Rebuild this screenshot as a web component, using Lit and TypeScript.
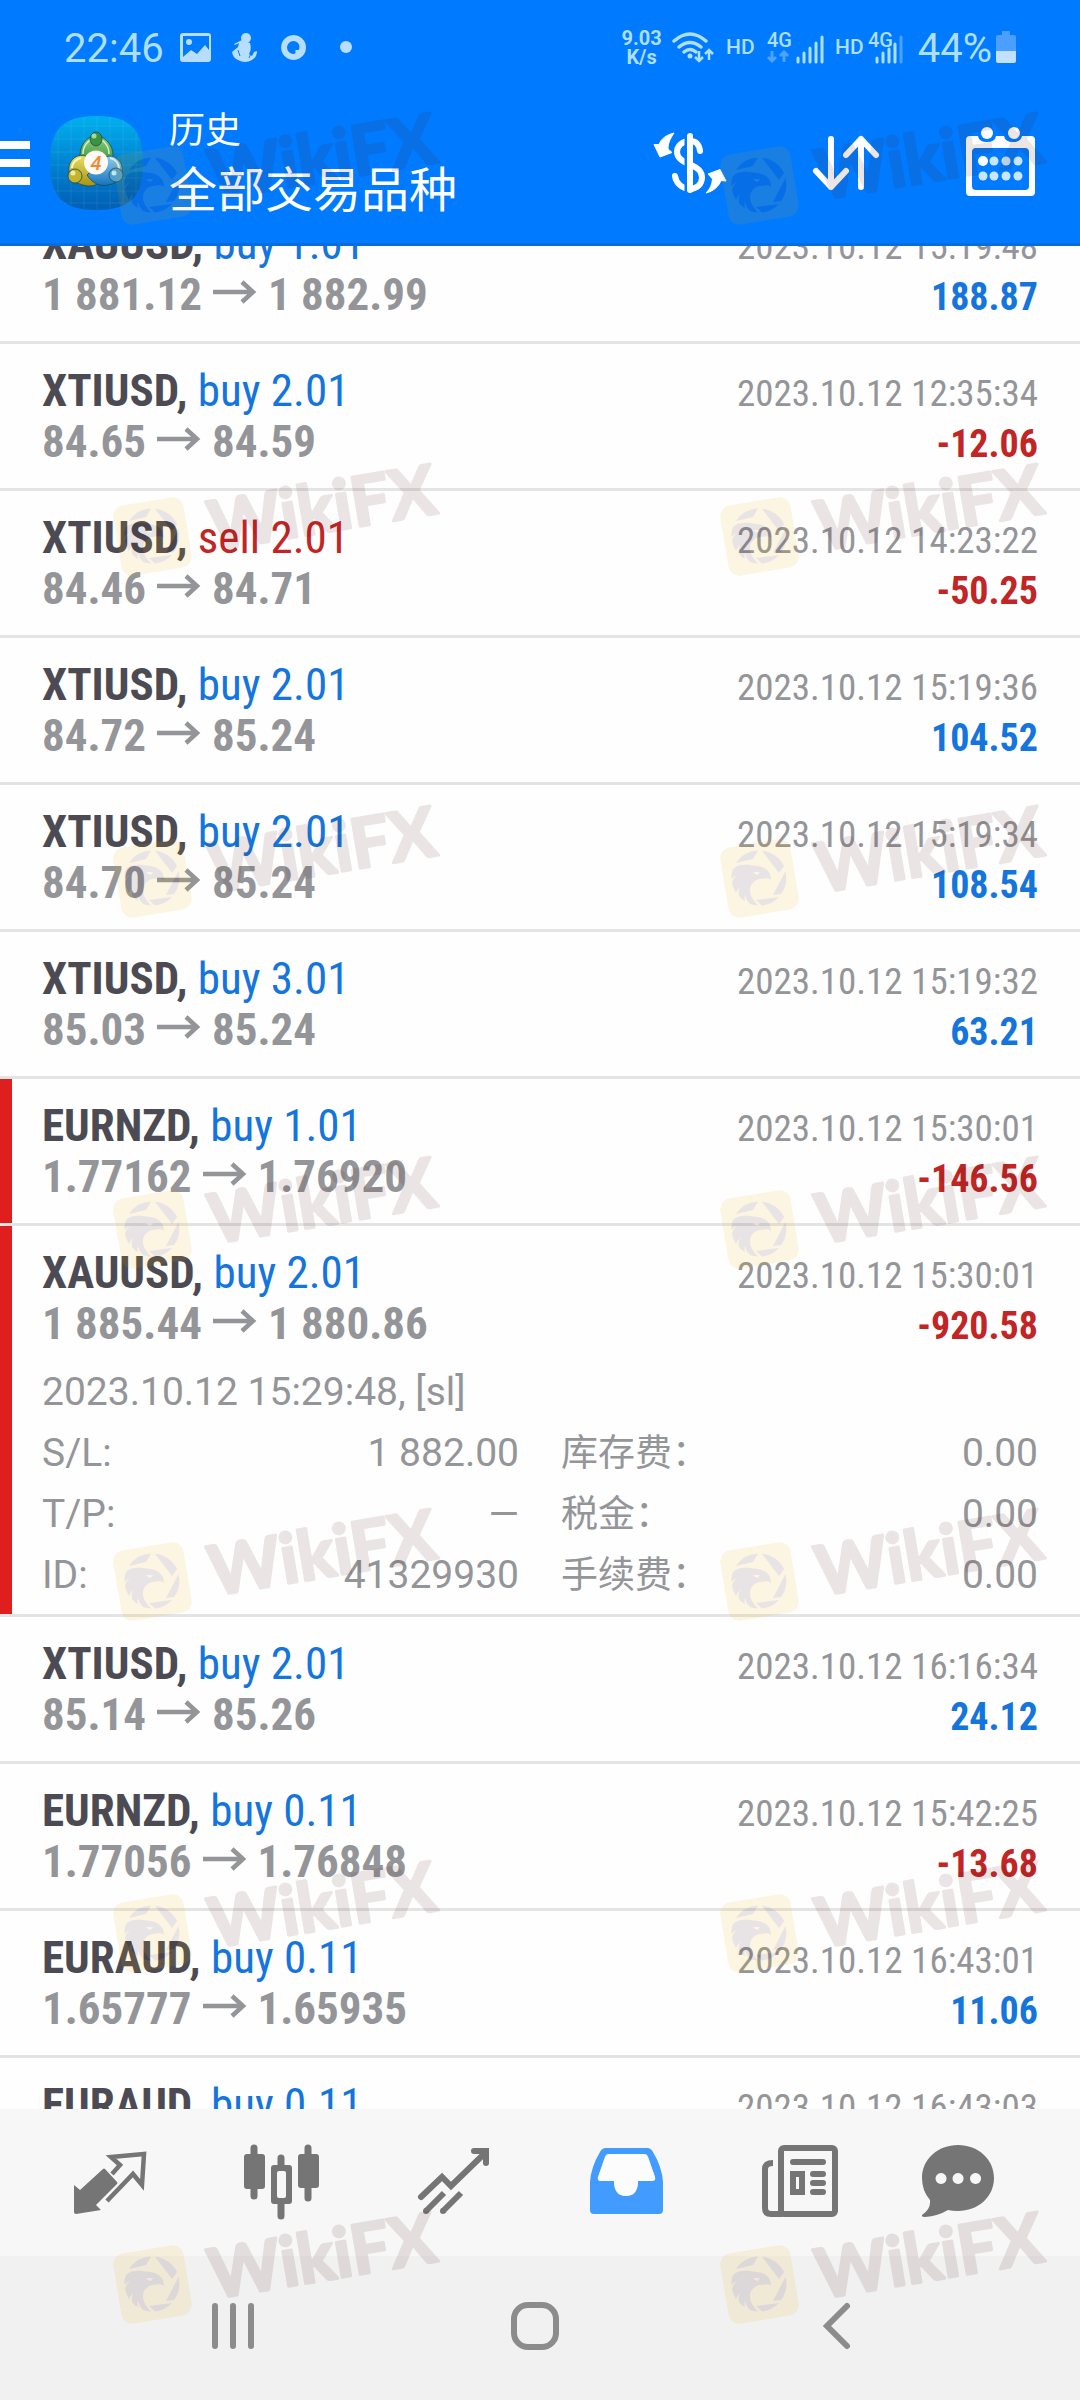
import { LitElement, html, css, svg, nothing } from "lit";
import { customElement, property } from "lit/decorators.js";

interface Deal {
  symbol: string;
  side: "buy" | "sell";
  volume: string;
  open: string;
  close: string;
  time: string;
  profit: string;
  stopped?: boolean;
  comment?: string;
  details?: [string, string][];
}

const DEALS: Deal[] = [
  { symbol: "XAUUSD", side: "buy", volume: "1.01", open: "1 881.12", close: "1 882.99", time: "2023.10.12 15:19:48", profit: "188.87" },
  { symbol: "XTIUSD", side: "buy", volume: "2.01", open: "84.65", close: "84.59", time: "2023.10.12 12:35:34", profit: "-12.06" },
  { symbol: "XTIUSD", side: "sell", volume: "2.01", open: "84.46", close: "84.71", time: "2023.10.12 14:23:22", profit: "-50.25" },
  { symbol: "XTIUSD", side: "buy", volume: "2.01", open: "84.72", close: "85.24", time: "2023.10.12 15:19:36", profit: "104.52" },
  { symbol: "XTIUSD", side: "buy", volume: "2.01", open: "84.70", close: "85.24", time: "2023.10.12 15:19:34", profit: "108.54" },
  { symbol: "XTIUSD", side: "buy", volume: "3.01", open: "85.03", close: "85.24", time: "2023.10.12 15:19:32", profit: "63.21" },
  { symbol: "EURNZD", side: "buy", volume: "1.01", open: "1.77162", close: "1.76920", time: "2023.10.12 15:30:01", profit: "-146.56", stopped: true },
  {
    symbol: "XAUUSD", side: "buy", volume: "2.01", open: "1 885.44", close: "1 880.86", time: "2023.10.12 15:30:01", profit: "-920.58", stopped: true,
    comment: "2023.10.12 15:29:48, [sl]",
    details: [
      ["S/L:", "1 882.00"],
      ["库存费：", "0.00"],
      ["T/P:", "—"],
      ["税金：", "0.00"],
      ["ID:", "41329930"],
      ["手续费：", "0.00"],
    ],
  },
  { symbol: "XTIUSD", side: "buy", volume: "2.01", open: "85.14", close: "85.26", time: "2023.10.12 16:16:34", profit: "24.12" },
  { symbol: "EURNZD", side: "buy", volume: "0.11", open: "1.77056", close: "1.76848", time: "2023.10.12 15:42:25", profit: "-13.68" },
  { symbol: "EURAUD", side: "buy", volume: "0.11", open: "1.65777", close: "1.65935", time: "2023.10.12 16:43:01", profit: "11.06" },
  { symbol: "EURAUD", side: "buy", volume: "0.11", open: "1.65790", close: "1.65935", time: "2023.10.12 16:43:03", profit: "10.02" },
];

@customElement("status-bar")
class StatusBar extends LitElement {
  static styles = css`
    :host {
      display: flex;
      align-items: center;
      justify-content: space-between;
      height: 94px;
      padding: 0 64px;
      color: #addfff;
      font-family: Roboto, "Liberation Sans", sans-serif;
    }
    .group { display: flex; align-items: center; }
    .clock { font-size: 40px; line-height: 48px; margin-right: 12px; padding-top: 4px; }
    .rate { font-size: 20px; font-weight: 700; line-height: 19px; text-align: center; margin-right: 10px; padding-top: 2px; }
    .level { font-size: 40px; line-height: 48px; margin: 0 4px 0 14px; padding-top: 4px; }
    .label { font-size: 21px; font-weight: 500; }
    .small { font-size: 20px; font-weight: 500; }
    svg { display: block; }
  `;

  render() {
    return html`
      <div class="group">
        <span class="clock">22:46</span>
        <svg width="180" height="48" viewBox="176 23 180 48" fill="#b8deff" aria-hidden="true">
          <path fill-rule="evenodd" d="M183 33h25q3 0 3 3v23q0 3-3 3h-25q-3 0-3-3v-23q0-3 3-3zm0 3v21l8-7 6 4 8-9 4 5v-14z" />
          <circle cx="189" cy="42" r="3" />
          <circle cx="246" cy="38" r="5" />
          <path d="M234 44l8-4 8 3q2 6-1 11l3 2 2-4 3-1q0 6-5 9-7 4-14 0-5-2-6-8l6-5 1-4-4 2z" />
          <path fill="none" stroke="#007aff" stroke-width="1" d="M238 50l2 6m12-5l-3 7" />
          <path fill-rule="evenodd" d="M293.500 35a12.500 12.500 0 1 0 .1 0zm0 6a6 6 0 0 1 6 6q0 2-1 3h-3v3q-1 1-2 1a6.500 6.500 0 0 1 0-13z" />
          <circle cx="346" cy="47" r="6" />
        </svg>
      </div>
      <div class="group">
        <span class="rate">9.03<br />K/s</span>
        <svg width="232" height="48" viewBox="674 23 232 48" aria-label="Wi-Fi, HD 4G, HD 4G">
          <g fill="none" stroke="#addfff" stroke-width="3.500" stroke-linecap="round">
            <path d="M676 41q16-14 32 0M681 47q11-9 22 0M686 52q6-5 12 0" />
          </g>
          <circle cx="692" cy="56" r="2.500" fill="#addfff" />
          <path d="M701 51v10m-4-4l4 4 4-4M711 60v-10m-4 4l4-4 4 4" fill="none" stroke="#addfff" stroke-width="2.500" />
          <g fill="#addfff">
            <text class="label" x="728" y="54">HD</text>
            <text class="small" x="769" y="47">4G</text>
            <text class="label" x="837" y="54">HD</text>
            <text class="small" x="870" y="47">4G</text>
          </g>
          <path d="M774 51v10m-4-4l4 4 4-4M786 62v-10m-4 4l4-4 4 4" fill="none" stroke="#4da3ff" stroke-width="3" />
          <g stroke="#addfff" stroke-width="3" stroke-linecap="round">
            <path d="M800 58v4M806 53v9M812 48v14M818 43v19M824 37v25" />
            <path d="M879 58v4M885 53v9M891 49v13M897 44v18" />
            <path d="M903 37v25" stroke="#4da3ff" />
          </g>
        </svg>
        <span class="level">44%</span>
        <svg width="20" height="32" viewBox="0 0 20 32" aria-hidden="true">
          <path d="M6 0h8v4h4q2 0 2 2v15h-20v-15q0-2 2-2h4z" fill="#4d9fff" />
          <path d="M0 20h20v10q0 2-2 2h-16q-2 0-2-2z" fill="#c2e0ff" />
        </svg>
      </div>
    `;
  }
}

@customElement("title-bar")
class TitleBar extends LitElement {
  static styles = css`
    :host {
      display: flex;
      align-items: center;
      height: 137px;
      padding-bottom: 12px;
      color: #fff;
      font-family: Roboto, "Noto Sans CJK SC", sans-serif;
    }
    button { border: 0; padding: 0; background: none; color: inherit; font: inherit; cursor: pointer; }
    svg { display: block; }
    .menu { width: 50px; }
    .titles { flex: 1; padding: 4px 0 0 26px; min-width: 0; }
    .caption { margin: 0; font-size: 36px; line-height: 52px; font-weight: 400; }
    .filter { display: block; font-size: 48px; line-height: 68px; text-align: left; }
    .actions { display: flex; }
    .action { width: 156px; display: flex; justify-content: center; }
  `;

  render() {
    return html`
      <button class="menu" aria-label="菜单">
        <svg width="30" height="48" viewBox="0 0 30 48" fill="#fff"><path d="M0 2h30v8h-30zM0 20h30v8h-30zM0 38h30v8h-30z" /></svg>
      </button>
      <svg width="93" height="94" viewBox="0 0 93 94" aria-hidden="true">
        <defs>
          <linearGradient id="sky" x1="0" y1="0" x2="0" y2="1"><stop offset="0" stop-color="#00b0ee" /><stop offset="0.550" stop-color="#007fd0" /><stop offset="1" stop-color="#005fb4" /></linearGradient>
          <linearGradient id="leaf" x1="0" y1="0" x2="0" y2="1"><stop offset="0" stop-color="#8fd07c" /><stop offset="1" stop-color="#217f2e" /></linearGradient>
          <linearGradient id="gold" x1="0" y1="0" x2="0" y2="1"><stop offset="0" stop-color="#e8df62" /><stop offset="1" stop-color="#a8940f" /></linearGradient>
          <linearGradient id="sea" x1="0" y1="0" x2="0" y2="1"><stop offset="0" stop-color="#8ccdf0" /><stop offset="1" stop-color="#1672bb" /></linearGradient>
        </defs>
        <path d="M46.500 0C80 0 93 13 93 47S80 94 46.500 94 0 81 0 47 13 0 46.500 0z" fill="url(#sky)" />
        <path d="M8 14v66M21 4v86M34 1v92M47 0v94M60 1v92M73 4v86M86 16v62M14 10h66M4 23h86M1 36h91M0 49h93M1 62h91M4 75h85M14 87h65" stroke="#fff" stroke-opacity="0.080" fill="none" />
        <g stroke="#1d4a50" stroke-width="0.800">
          <path d="M46 20C56 20 63 30 63 39C63 47 57 53 50 55L40 55C33 52 30 46 30 39C30 30 36 20 46 20z" fill="url(#leaf)" />
          <path d="M33 38C33 30 38 24 44 23M48 23C54 24 59 30 59 38" fill="none" stroke="#d6f2c8" stroke-width="1.500" />
          <path d="M21 60C17 54 19 46 24 42C29 38 36 39 42 43L50 66C46 70 39 71 33 69C28 68 24 65 21 60z" fill="url(#gold)" />
          <path d="M22 52C22 47 26 43 31 42" fill="none" stroke="#fbf8c4" stroke-width="2" />
          <path d="M71 60C74 53 72 46 66 42C62 39 57 40 54 42L37 59C42 67 50 71 58 69C64 68 69 65 71 60z" fill="url(#sea)" />
          <path d="M60 42C65 43 69 47 69 53" fill="none" stroke="#d5efff" stroke-width="2" />
          <ellipse cx="46" cy="23" rx="6" ry="7" fill="#3d9440" />
          <circle cx="25" cy="60" r="7" fill="#c4b32c" />
          <circle cx="66" cy="59" r="7" fill="#4aa0d4" />
        </g>
        <circle cx="44" cy="20" r="2.500" fill="#a5d99a" />
        <circle cx="23" cy="57" r="2.500" fill="#f0eaa0" />
        <circle cx="64" cy="57" r="2.500" fill="#c2e6fa" />
        <circle cx="46" cy="46.500" r="12" fill="#fffaf4" />
        <text x="46" y="54" text-anchor="middle" font-size="20" font-style="italic" font-weight="500" fill="#f0883a">4</text>
      </svg>
      <div class="titles">
        <h1 class="caption">历史</h1>
        <button class="filter">全部交易品种</button>
      </div>
      <div class="actions">
        <button class="action" aria-label="余额操作">
          <svg width="96" height="96" viewBox="2 4 96 96" fill="#fff">
            <path d="M60 40C59 32 55 30 50 30C42 30 37 35 37 41C37 47 42 50.500 50 53.500C58 56.500 62 60 62 66.500C62 73 57 78 50 78C42 78 36 72 35 65" fill="none" stroke="#fff" stroke-width="6" stroke-linecap="round" />
            <path d="M44.500 22h4v60h-4z" fill="#007aff" />
            <path d="M50 25v54" stroke="#fff" stroke-width="6" stroke-linecap="round" />
            <path d="M34 22C26 24 21 28 19 33.500L14 33.500L20 46L32 41.500L28 38C28 32 30 28 34 22z" stroke="#fff" stroke-linejoin="round" />
            <path d="M66 82C70 78 72 74 72.500 68L68 63L80 58.500L86 70L81 69.500C79 75 74 80 66 82z" stroke="#fff" stroke-linejoin="round" />
          </svg>
        </button>
        <button class="action" aria-label="排序">
          <svg width="96" height="96" viewBox="798 114 96 96" fill="none" stroke="#fff" stroke-width="6" stroke-linecap="round" stroke-linejoin="round">
            <path d="M831 138v48M816 170l15 16 15-16M861 186v-48M846 154l15-16 15 16" />
          </svg>
        </button>
        <button class="action" aria-label="选择时间段">
          <svg width="96" height="96" viewBox="954 114 96 96" fill="#fff">
            <path fill-rule="evenodd" d="M970 135h8q1 6 9 6t9-6h8q1 6 9 6t9-6h9q4 0 4 4v52q0 4-4 4h-61q-4 0-4-4v-52q0-4 4-4zm6 12q-4 0-4 4v34q0 4 4 4h49q4 0 4-4v-34q0-4-4-4z" />
            <circle cx="987" cy="132" r="6" /><circle cx="1014" cy="132" r="6" />
            <circle cx="983" cy="160" r="5" />
            <g fill="#c8e6ff">
              <circle cx="994" cy="160" r="4.500" /><circle cx="1006" cy="160" r="4.500" /><circle cx="1018" cy="160" r="4.500" />
              <circle cx="983" cy="175" r="4.500" /><circle cx="994" cy="175" r="4.500" /><circle cx="1006" cy="175" r="4.500" /><circle cx="1018" cy="175" r="4.500" />
            </g>
          </svg>
        </button>
      </div>
    `;
  }
}

@customElement("deal-row")
class DealRow extends LitElement {
  @property({ attribute: false }) deal!: Deal;

  static styles = css`
    :host {
      display: block;
      background: #fefefe;
      border-bottom: 3px solid #e4e4e4;
      font-family: "Roboto Condensed", "Liberation Sans Narrow", Roboto, sans-serif;
      color: #949599;
    }
    .row { padding: 21px 42px; }
    .stopped { padding-left: 30px; border-left: 12px solid #e01e1e; }
    .expanded { padding-bottom: 8px; }
    .line { display: flex; justify-content: space-between; align-items: baseline; line-height: 51px; height: 51px; }
    .deal, .prices { font-size: 45px; }
    .symbol { color: #4c4b53; font-weight: 700; }
    .buy { color: #1475dc; }
    .sell { color: #c22525; }
    .prices { font-weight: 700; }
    .arrow { width: 44px; height: 24px; margin: 0 11px 6px 11px; vertical-align: baseline; }
    .time { font-size: 37px; }
    .profit { font-size: 38px; font-weight: 700; }
    .more { margin-top: 13px; font: 39px/61px Roboto, "Noto Sans CJK SC", sans-serif; }
    .comment { margin: 0; }
    .details { display: grid; grid-template-columns: 1fr 1fr; column-gap: 42px; margin: 0; }
    .pair { display: flex; justify-content: space-between; align-items: baseline; height: 61px; }
    .pair:nth-child(even) dt { font-size: 37px; }
    dd { margin: 0; }
  `;

  render() {
    const d = this.deal;
    return html`
      <article class="row ${d.stopped ? "stopped" : ""} ${d.details ? "expanded" : ""}">
        <div class="line">
          <span class="deal"><span class="symbol">${d.symbol},</span> <span class=${d.side}>${d.side} ${d.volume}</span></span>
          <time class="time">${d.time}</time>
        </div>
        <div class="line">
          <span class="prices">${d.open}<svg class="arrow" viewBox="0 0 44 24" role="img" aria-label="→"><path d="M0 12h40M29 2l11 10-11 10" fill="none" stroke="#949599" stroke-width="4.500" /></svg>${d.close}</span>
          <span class="profit ${d.profit.startsWith("-") ? "sell" : "buy"}">${d.profit}</span>
        </div>
        ${d.details
          ? html`<div class="more">
              <p class="comment">${d.comment}</p>
              <dl class="details">
                ${d.details.map(([name, value]) => html`<div class="pair"><dt>${name}</dt><dd>${value}</dd></div>`)}
              </dl>
            </div>`
          : nothing}
      </article>
    `;
  }
}

const TABS = [
  {
    label: "行情",
    icon: svg`
      <path d="M103 2169q1-1 2 0l12 13q1 1 0 2l-21 21 5 5-25 4q-2 0-2-2v-27l6 5z" />
      <path d="M112 2174l8-9-9-8 33-3-2 31-9-11-26 27" fill="none" stroke="#757575" stroke-width="4.500" />`,
  },
  {
    label: "图表",
    icon: svg`
      <path d="M254 2148v48M308 2148v50M281 2158v8M281 2203v13" fill="none" stroke="#757575" stroke-width="7" stroke-linecap="round" />
      <rect x="244" y="2154" width="21" height="35" rx="3" /><rect x="298" y="2154" width="21" height="34" rx="3" />
      <path fill-rule="evenodd" d="M274 2165h15q3 0 3 3v33q0 3-3 3h-15q-3 0-3-3v-33q0-3 3-3zm5 6q-2 0-2 2v23q0 2 2 2h5q2 0 2-2v-23q0-2-2-2z" />`,
  },
  {
    label: "交易",
    icon: svg`
      <path d="M421 2197l21-20 9 9 34-33M474 2151h12v12" fill="none" stroke="#757575" stroke-width="6" stroke-linecap="round" stroke-linejoin="miter" />
      <path d="M444 2193l-18 18M461 2193l-18 18" fill="none" stroke="#757575" stroke-width="6" />
      <circle cx="426" cy="2211" r="3" /><circle cx="443" cy="2211" r="3" />`,
  },
  {
    label: "历史",
    icon: svg`
      <path fill="#429bff" fill-rule="evenodd" d="M606 2148h41q4 0 6 4 9 15 10 30v28q0 4-4 4h-65q-4 0-4-4v-28q1-15 10-30 2-4 6-4zm3 6q-3 0-4 3l-7 20q-1 4 3 4h13q0 15 12 15t12-15h14q4 0 3-4l-7-20q-1-3-4-3z" />
      <path fill="#fff" fill-opacity="0.600" d="M609 2154q-3 0-4 3l-7 20q-1 4 3 4h13q0 15 12 15t12-15h14q4 0 3-4l-7-20q-1-3-4-3z" />`,
  },
  {
    label: "新闻",
    icon: svg`
      <g fill="none" stroke="#757575" stroke-width="6">
        <rect x="781" y="2148" width="54" height="66" rx="3" />
        <path d="M773 2163q-8 0-8 6v39q0 6 6 6h12" />
        <rect x="793" y="2174" width="9" height="18" />
      </g>
      <path d="M793 2162h30M813 2174h10M813 2183h10M813 2192h10" stroke="#757575" stroke-width="6" stroke-linecap="round" />`,
  },
  {
    label: "消息",
    icon: svg`
      <path fill-rule="evenodd" d="M958 2145c20 0 36 14 36 33s-16 33-36 33q-6 0-10-1-10 6-23 7-4 0-3-2 9-6 8-15-8-9-8-22c0-19 16-33 36-33zM941 2173a5.500 5.500 0 1 0 .1 0zm17 0a5.500 5.500 0 1 0 .1 0zm17.500 0a5.500 5.500 0 1 0 .1 0z" />`,
  },
];

@customElement("tab-bar")
class TabBar extends LitElement {
  static styles = css`
    :host { display: block; background: #f7f7f7; }
    .tabs { display: grid; grid-template-columns: repeat(6, 1fr); padding: 0 24px; }
    .tab { display: flex; justify-content: center; padding: 25px 0 26px; border: 0; background: none; cursor: pointer; }
    svg { display: block; }
  `;

  render() {
    return html`<nav class="tabs">
      ${TABS.map(
        (tab, i) => html`<button class="tab" aria-label=${tab.label}>
          <svg width="96" height="96" viewBox="${62 + 172 * i} 2134 96 96" fill="#757575">${tab.icon}</svg>
        </button>`,
      )}
    </nav>`;
  }
}

@customElement("system-nav")
class SystemNav extends LitElement {
  static styles = css`
    :host { display: block; background: #f1f1f1; }
    .keys { display: grid; grid-template-columns: repeat(3, 1fr); padding: 0 92px 0 82px; height: 144px; }
    .key { display: flex; justify-content: center; align-items: center; padding: 0 0 4px; border: 0; background: none; }
    svg { display: block; }
  `;

  render() {
    return html`<div class="keys">
      <button class="key" aria-label="Recents">
        <svg width="60" height="60" viewBox="0 0 60 60" stroke="#8c8c8c" stroke-width="6" stroke-linecap="round"><path d="M12 10v40M30 10v40M48 10v40" /></svg>
      </button>
      <button class="key" aria-label="Home">
        <svg width="60" height="60" viewBox="0 0 60 60" fill="none" stroke="#8c8c8c" stroke-width="6"><rect x="9" y="9" width="42" height="42" rx="14" /></svg>
      </button>
      <button class="key" aria-label="Back">
        <svg width="60" height="60" viewBox="0 0 60 60" fill="none" stroke="#8c8c8c" stroke-width="6" stroke-linecap="round"><path d="M40 10L20 30l20 20" /></svg>
      </button>
    </div>`;
  }
}

const MARK_ROWS = [105, 456, 798, 1149, 1501, 1853, 2204];
const MARK_COLUMNS = [100, 707];

@customElement("brand-marks")
class BrandMarks extends LitElement {
  static styles = css`
    :host { position: absolute; inset: 0; overflow: hidden; pointer-events: none; }
    .mark { position: absolute; width: 350px; height: 124px; opacity: 0.110; }
    .word { font: 700 69px Lato, sans-serif; }
  `;

  render() {
    return html`${MARK_ROWS.map((top) =>
      MARK_COLUMNS.map(
        (left) => html`<svg class="mark" style="top:${top}px;left:${left}px" viewBox="0 0 350 124" aria-hidden="true">
          <rect x="17" y="45" width="71" height="71" rx="11" fill="#e9a800" transform="rotate(-9.500 52.500 80.500)" />
          <g transform="translate(52 80)" fill="#3c1420">
            <path d="M-23 -15A27.500 27.500 0 0 1 -1 -27.500L-6 -19z" />
            <path d="M3 -27.300A27.500 27.500 0 0 1 25 -12L20 -5z" />
            <path d="M26.500 -7A27.500 27.500 0 0 1 22 16L14 17z" />
            <path d="M20 19A27.500 27.500 0 0 1 3 27.500L-3 22z" />
            <path d="M-26 -9C-20 -15 -10 -13 -2 -12C7 -11 12 -6 12 2C8 -1 5 1 0 1C-6 3 -9 7 -9 12C-9 18 -6 22 -1 27.500Q-6 27 -9 26Q-13 22 -14 17Q-15 20 -14 23Q-18 21 -20 18Q-21 14 -19 9Q-22 12 -23 15Q-26 10 -27 5Q-26 0 -22 -3Q-25 -2 -27.500 1Q-28 -4 -26 -9z" />
            <path d="M-6 -6q4 0 7 0l-2 3q-3 0-5-3z" fill="#e9a800" />
          </g>
          <text class="word" x="113" y="95" fill="#4b1c13" stroke="#4b1c13" stroke-width="3" stroke-linejoin="round" transform="rotate(-9.500 113 95)">WikiFX</text>
        </svg>`,
      ),
    )}`;
  }
}

@customElement("app-root")
class AppRoot extends LitElement {
  static styles = css`
    :host {
      display: flex;
      flex-direction: column;
      position: relative;
      height: 100vh;
      background: #fefefe;
    }
    .top { background: #007aff; border-bottom: 3px solid #0a6cdb; }
    .history { flex: 1; min-height: 0; overflow-y: auto; scrollbar-width: none; }
  `;

  async firstUpdated() {
    const list = this.renderRoot.querySelector(".history") as HTMLElement;
    const rows = Array.from(list.querySelectorAll("deal-row")) as LitElement[];
    await Promise.all(rows.map((row) => row.updateComplete));
    list.scrollTop = 49;
  }

  render() {
    return html`
      <header class="top">
        <status-bar></status-bar>
        <title-bar></title-bar>
      </header>
      <main class="history">${DEALS.map((deal) => html`<deal-row .deal=${deal}></deal-row>`)}</main>
      <tab-bar></tab-bar>
      <system-nav></system-nav>
      <brand-marks></brand-marks>
    `;
  }
}
